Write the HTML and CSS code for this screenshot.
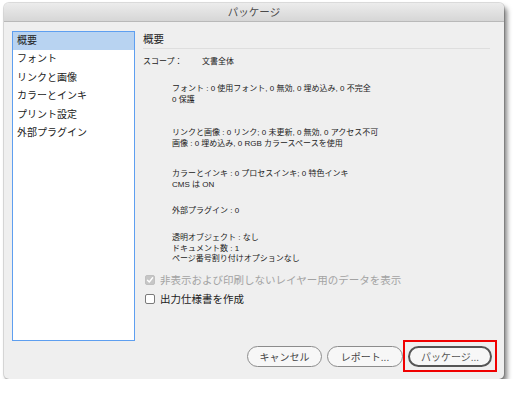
FILE: index.html
```html
<!DOCTYPE html>
<html lang="ja">
<head>
<meta charset="utf-8">
<title>パッケージ</title>
<link rel="stylesheet" href="styles.css">
</head>
<body>
<div class="window">
  <div class="titlebar">パッケージ</div>
  <div class="body">
    <div class="main">
      <ul class="sidebar">
        <li class="item selected">概要</li>
        <li class="item">フォント</li>
        <li class="item">リンクと画像</li>
        <li class="item">カラーとインキ</li>
        <li class="item">プリント設定</li>
        <li class="item">外部プラグイン</li>
      </ul>
      <div class="panel">
        <div class="heading">概要</div>
        <div class="scope"><span class="scope-label">スコープ：</span><span>文書全体</span></div>
        <div class="group g1">
          <div>フォント : 0 使用フォント, 0 無効, 0 埋め込み, 0 不完全</div>
          <div>0 保護</div>
        </div>
        <div class="group g2">
          <div>リンクと画像 : 0 リンク; 0 未更新, 0 無効, 0 アクセス不可</div>
          <div>画像 : 0 埋め込み, 0 RGB カラースペースを使用</div>
        </div>
        <div class="group g3">
          <div>カラーとインキ : 0 プロセスインキ; 0 特色インキ</div>
          <div>CMS は ON</div>
        </div>
        <div class="group g4">
          <div>外部プラグイン : 0</div>
        </div>
        <div class="group g5">
          <div>透明オブジェクト : なし</div>
          <div>ドキュメント数 : 1</div>
          <div>ページ番号割り付けオプションなし</div>
        </div>
        <label class="check disabled first">
          <span class="box checked">
            <svg width="8" height="8" viewBox="0 0 8 8"><path d="M1.5 4.2 L3.3 6 L6.6 1.8" fill="none" stroke="#fff" stroke-width="1.4" stroke-linecap="round" stroke-linejoin="round"/></svg>
          </span>
          <span>非表示および印刷しないレイヤー用のデータを表示</span>
        </label>
        <label class="check">
          <span class="box"></span>
          <span>出力仕様書を作成</span>
        </label>
      </div>
    </div>
    <div class="footer">
      <button class="btn">キャンセル</button>
      <button class="btn report">レポート...</button>
      <span class="highlight"><button class="btn default">パッケージ...</button></span>
    </div>
  </div>
</div>
</body>
</html>
```
FILE: styles.css
```css
* { box-sizing: border-box; }
html, body { margin: 0; padding: 0; background: #ffffff; }
body {
  padding: 3px 0 0 4px;
  font-family: "Liberation Sans", "Noto Sans CJK JP", sans-serif;
  color: #222;
}
.window {
  width: 500px;
  height: 376px;
  background: #efefef;
  border-radius: 5px;
  box-shadow: 0 0 0 1px rgba(0,0,0,0.13), 3px 4px 5px rgba(0,0,0,0.5);
  overflow: hidden;
  display: flex;
  flex-direction: column;
}
.titlebar {
  height: 19px;
  line-height: 18px;
  text-align: center;
  font-size: 10.5px;
  color: #4a4a4a;
  background: linear-gradient(#ececec, #d6d6d6);
  border-bottom: 1px solid #b9b9b9;
  flex: none;
}
.body {
  padding: 9px 12px 12px 8px;
  display: flex;
  flex-direction: column;
  flex: 1;
}
.main {
  display: flex;
  gap: 8px;
  height: 310px;
}
.sidebar {
  list-style: none;
  margin: 0;
  padding: 0;
  width: 123px;
  height: 310px;
  background: #fff;
  border: 1px solid #5e9ff0;
  flex: none;
}
.item {
  height: 18.4px;
  line-height: 18px;
  padding-left: 4px;
  font-size: 10px;
  color: #222;
}
.item.selected { background: #b8d3f1; }
.panel {
  flex: 1;
  padding-right: 2px;
}
.heading {
  font-size: 10.5px;
  line-height: 17px;
  height: 18px;
  border-bottom: 1px solid #dedede;
}
.scope {
  margin-top: 7px;
  font-size: 8px;
  line-height: 11px;
  display: flex;
}
.scope-label { width: 59px; }
.group {
  padding-left: 29px;
  font-size: 8px;
  line-height: 10.5px;
}
.g1 { margin-top: 17px; }
.g2 { margin-top: 23px; }
.g3 { margin-top: 20px; }
.g4 { margin-top: 16px; }
.g5 { margin-top: 16.5px; }
.check {
  display: flex;
  align-items: center;
  gap: 5px;
  height: 14px;
  font-size: 10.5px;
  color: #222;
  padding-left: 2px;
  margin-top: 5px;
}
.check.first { margin-top: 8px; }
.check.disabled { color: #a3a3a3; }
.box {
  width: 10px;
  height: 10px;
  border: 1px solid #7a7a7a;
  border-radius: 2px;
  background: #fff;
  display: flex;
  align-items: center;
  justify-content: center;
  flex: none;
}
.box.checked {
  background: #c6c6c6;
  border-color: #c0c0c0;
}
.footer {
  margin-top: 5px;
  display: flex;
  justify-content: flex-end;
  gap: 5px;
}
.btn {
  height: 21px;
  width: 75px;
  padding: 0;
  border: 1px solid #8c8c8c;
  border-radius: 11px;
  background: #f7f7f7;
  font-family: "Liberation Sans", "Noto Sans CJK JP", sans-serif;
  font-size: 10px;
  color: #444;
}
.btn.report { width: 76px; }
.highlight {
  display: flex;
  margin: -6px -5px -5px -5px;
  padding: 4px 3px 3px 3px;
  border: 2px solid #f00000;
}
.btn.default {
  width: 84px;
  border: 2px solid #555;
  color: #555;
}
```
